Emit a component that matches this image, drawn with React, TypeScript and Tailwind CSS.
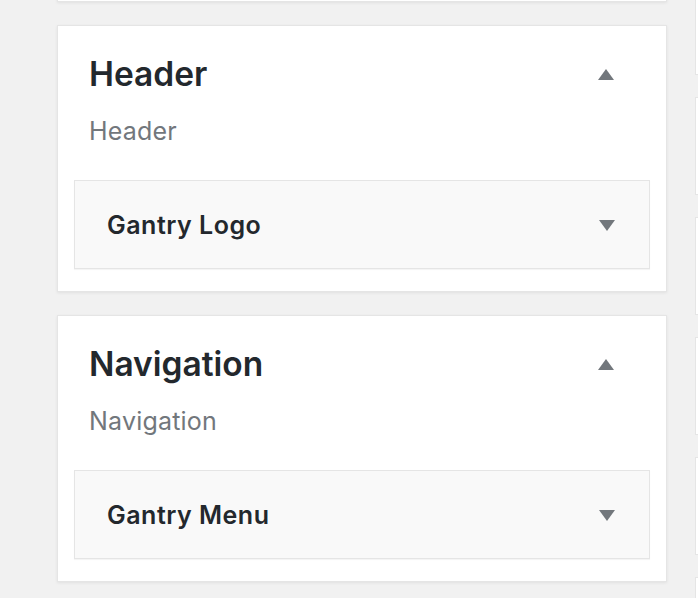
import React from 'react';

const sections = [
  { title: 'Header', subtitle: 'Header', widget: 'Gantry Logo' },
  { title: 'Navigation', subtitle: 'Navigation', widget: 'Gantry Menu' },
];

const Caret = ({ up }: { up?: boolean }) => (
  <svg width="16" height="11" viewBox="0 0 16 11" className="shrink-0">
    <polygon points={up ? '8,0 16,11 0,11' : '0,0 16,0 8,11'} fill="#72777c" />
  </svg>
);

const WidgetArea = ({ title, subtitle, widget }: { title: string; subtitle: string; widget: string }) => (
  <div className="w-[610px] bg-white border border-[#e5e5e5] shadow-[0_1px_3px_rgba(0,0,0,0.07)] px-[16px] pt-[28px] pb-[22px]">
    <div className="flex items-center justify-between pl-[15px] pr-[36px]">
      <h3 className="text-[33.5px] leading-[40px] font-semibold text-[#23282d]">{title}</h3>
      <Caret up />
    </div>
    <p className="mt-[21px] pl-[15px] text-[25px] leading-[32px] tracking-[0.2px] text-[#72777c]">{subtitle}</p>
    <div className="mt-[33px] flex items-center justify-between bg-[#f9f9f9] border border-[#e5e5e5] shadow-[0_1px_1px_rgba(0,0,0,0.04)] pl-[32px] pr-[34px] pt-[28px] pb-[27px]">
      <span className="text-[25px] leading-[32px] tracking-[0.5px] font-semibold text-[#23282d]">{widget}</span>
      <Caret />
    </div>
  </div>
);

export default function App() {
  return (
    <div
      className="h-[598px] w-full overflow-hidden bg-[#f1f1f1] flex items-start gap-[28px] pl-[57px]"
      style={{ fontFamily: 'Inter, "Noto Sans", sans-serif' }}
    >
      <div className="mt-[-265px] flex flex-col gap-[23px] shrink-0">
        {/* previous widget area, scrolled mostly out of view */}
        <div className="h-[267px] w-[610px] bg-white border border-[#e5e5e5] shadow-[0_1px_3px_rgba(0,0,0,0.07)]" />
        {sections.map((s) => (
          <WidgetArea key={s.title} {...s} />
        ))}
      </div>
      <div className="mt-[-23px] flex flex-col gap-[22px] shrink-0">
        {[0, 1, 2, 3, 4, 5].map((i) => (
          <div key={i} className="h-[98px] w-[200px] bg-white border border-[#e5e5e5]" />
        ))}
      </div>
    </div>
  );
}
